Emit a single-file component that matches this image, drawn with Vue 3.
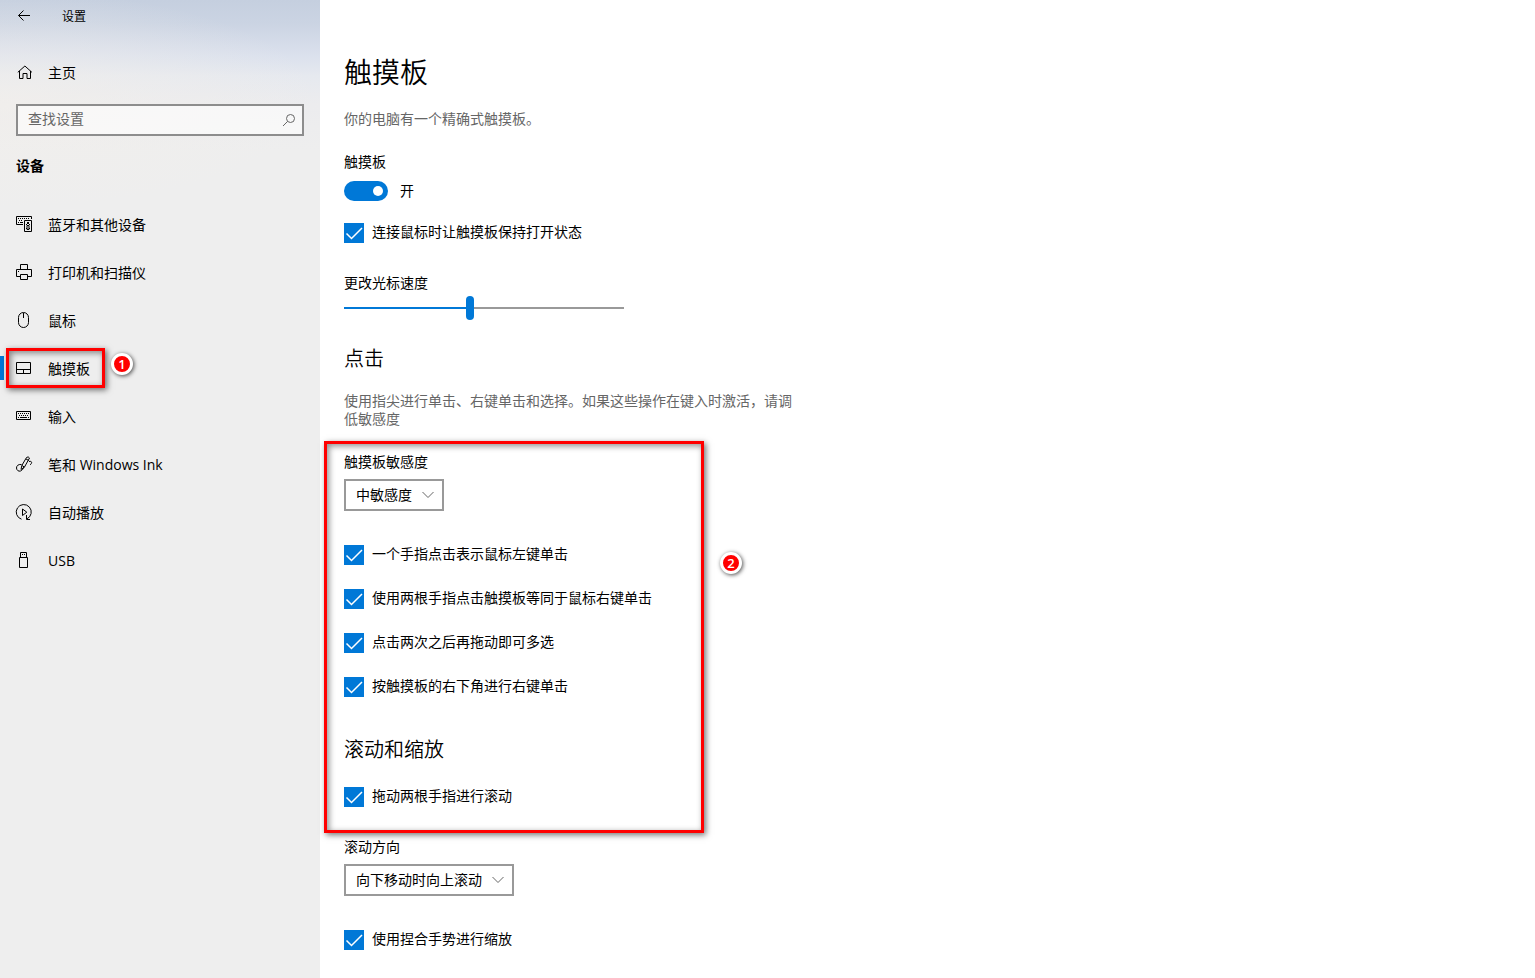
<template>
  <div class="settings">
    <aside class="sidebar">
      <header class="title-bar">
        <button class="back" type="button" aria-label="返回">
          <svg width="16" height="16" viewBox="0 0 16 16" class="icon">
            <path d="M2.5 7.5H14M7.5 2.5l-5 5 5 5" />
          </svg>
        </button>
        <span class="window-title">设置</span>
      </header>

      <a href="#home" class="nav-link home">
        <svg width="16" height="16" viewBox="0 0 16 16" class="icon">
          <path d="M1.8 8.3L8.9 2l7 6.3M3.5 7v7.5h3.500v-5h4v5h3.500V7" />
        </svg>
        <span class="nav-text">主页</span>
      </a>

      <div class="search">
        <input v-model="query" type="text" placeholder="查找设置" aria-label="查找设置" />
        <svg width="14" height="14" viewBox="0 0 14 14" class="search-icon">
          <circle cx="8.500" cy="5.500" r="4" />
          <path d="M5.600 8.400L1 13" />
        </svg>
      </div>

      <h2 class="group-title">设备</h2>

      <nav class="nav">
        <a
          v-for="item in items"
          :key="item.id"
          :href="'#' + item.id"
          class="nav-link"
          :class="{ active: item.id === current }"
          @click.prevent="current = item.id"
        >
          <svg width="16" height="16" viewBox="0 0 16 16" class="icon">
            <path v-for="(d, i) in item.lines" :key="i" :d="d" />
            <path v-if="item.fill" :d="item.fill" class="solid" />
          </svg>
          <span class="nav-text">{{ item.label }}</span>
          <template v-if="item.id === 'touchpad'">
            <span class="frame frame-nav"></span>
            <span class="step step-nav">1</span>
          </template>
        </a>
      </nav>
    </aside>

    <main class="content">
      <h1>触摸板</h1>
      <p class="hint intro">你的电脑有一个精确式触摸板。</p>

      <label class="field-label" for="touchpad-switch">触摸板</label>
      <div class="switch-row">
        <input id="touchpad-switch" v-model="enabled" type="checkbox" role="switch" class="switch" />
        <span>{{ enabled ? '开' : '关' }}</span>
      </div>

      <label class="check keep-on">
        <span class="box">
          <input v-model="keepOn" type="checkbox" />
          <svg width="20" height="20" viewBox="0 0 20 20"><path d="M2.500 10.500l5 5L18 5" /></svg>
        </span>
        连接鼠标时让触摸板保持打开状态
      </label>

      <label class="field-label after-check" for="speed">更改光标速度</label>
      <input
        id="speed"
        v-model.number="speed"
        type="range"
        min="0"
        max="20"
        class="slider"
        :style="{ '--fill': speed * 5 + '%' }"
      />

      <h2 class="section-title taps-title">点击</h2>
      <p class="hint">使用指尖进行单击、右键单击和选择。如果这些操作在键入时激活，请调低敏感度</p>

      <section class="marked">
        <label class="field-label" for="sensitivity">触摸板敏感度</label>
        <div class="select">
          <select id="sensitivity">
            <option>中敏感度</option>
          </select>
          <svg width="12" height="8" viewBox="0 0 12 8"><path d="M.5 1L6 6.500 11.500 1" /></svg>
        </div>

        <div class="check-list">
          <label v-for="tap in taps" :key="tap.label" class="check">
            <span class="box">
              <input v-model="tap.on" type="checkbox" />
              <svg width="20" height="20" viewBox="0 0 20 20"><path d="M2.500 10.500l5 5L18 5" /></svg>
            </span>
            {{ tap.label }}
          </label>
        </div>

        <h2 class="section-title scroll-title">滚动和缩放</h2>
        <label class="check">
          <span class="box">
            <input v-model="twoFinger" type="checkbox" />
            <svg width="20" height="20" viewBox="0 0 20 20"><path d="M2.500 10.500l5 5L18 5" /></svg>
          </span>
          拖动两根手指进行滚动
        </label>

        <span class="frame frame-section"></span>
        <span class="step step-section">2</span>
      </section>

      <label class="field-label after-check" for="direction">滚动方向</label>
      <div class="select">
        <select id="direction">
          <option>向下移动时向上滚动</option>
        </select>
        <svg width="12" height="8" viewBox="0 0 12 8"><path d="M.5 1L6 6.500 11.500 1" /></svg>
      </div>

      <div class="check-list">
        <label class="check">
          <span class="box">
            <input v-model="pinch" type="checkbox" />
            <svg width="20" height="20" viewBox="0 0 20 20"><path d="M2.500 10.500l5 5L18 5" /></svg>
          </span>
          使用捏合手势进行缩放
        </label>
      </div>
    </main>
  </div>
</template>

<script setup>
import { ref } from 'vue'

const query = ref('')
const current = ref('touchpad')
const enabled = ref(true)
const keepOn = ref(true)
const speed = ref(9)
const twoFinger = ref(true)
const pinch = ref(true)

const taps = ref([
  { label: '一个手指点击表示鼠标左键单击', on: true },
  { label: '使用两根手指点击触摸板等同于鼠标右键单击', on: true },
  { label: '点击两次之后再拖动即可多选', on: true },
  { label: '按触摸板的右下角进行右键单击', on: true },
])

const items = [
  {
    id: 'bluetooth',
    label: '蓝牙和其他设备',
    lines: ['M15.5 3V.5H.5v8H7', 'M8.5 4.500h7v11h-7z', 'M11 9.500h2v4h-2z'],
    fill: 'M2 2h1v1H2zM4 2h1v1H4zM6 2h1v1H6zM8 2h1v1H8zM10 2h1v1h-1zM12 2h1v1h-1zM3 4h1v1H3zM5 4h1v1H5zM2 6h1v1H2zM4 6h3v1H4zM11 6h2v2h-2zM10 8h1v1h-1zM13 8h1v1h-1zM10 12h1v1h-1zM13 12h1v1h-1z',
  },
  {
    id: 'printers',
    label: '打印机和扫描仪',
    lines: ['M4.5 5.500v-5h7v5', 'M4.5 12.500h-4v-7h15v7h-4', 'M4.5 10.500h7v5h-7z'],
    fill: 'M2 7h1v1H2z',
  },
  {
    id: 'mouse',
    label: '鼠标',
    lines: ['M2.5 5.500a5 5 0 0 1 10 0v5a5 5 0 0 1-10 0z', 'M7.500 1v5'],
  },
  {
    id: 'touchpad',
    label: '触摸板',
    lines: ['M.5 2.500h14v11H.5z', 'M.5 9.500h14', 'M7.500 9.500v4'],
  },
  {
    id: 'typing',
    label: '输入',
    lines: ['M.5 3.500h14v8H.5z'],
    fill: 'M2 5h1v1H2zM4 5h1v1H4zM6 5h1v1H6zM8 5h1v1H8zM10 5h1v1h-1zM12 5h1v1h-1zM3 7h1v1H3zM5 7h1v1H5zM7 7h1v1H7zM9 7h1v1H9zM11 7h1v1h-1zM2 9h1v1H2zM4 9h7v1H4zM12 9h1v1h-1z',
  },
  {
    id: 'pen',
    label: '笔和 Windows Ink',
    lines: [
      'M5 13.500l.8-4L10.500 1.500q1.800-1.500 3 .5L8.500 11z',
      'M6 9.500l2.300 1.500M10 3l2.800 1.500',
      'M5.500 8.500C2 8 .5 10 .5 12s2 3.800 4 3 2.500-2 3.500-4',
      'M13 5.500c3-.8 3.500 1.500 1 3.500',
    ],
  },
  {
    id: 'autoplay',
    label: '自动播放',
    lines: ['M5.500 15.200A7.500 7.500 0 1 1 11 14.800', 'M6.500 5v6.500L10.800 8.200z', 'M10.500 11v4.500H14'],
  },
  {
    id: 'usb',
    label: 'USB',
    lines: ['M4.500 5.500v-5h6v5', 'M3.500 5.500h8v10h-8z'],
    fill: 'M6 2h1v1H6zM8 2h1v1H8z',
  },
]
</script>

<style>
body {
  margin: 0;
  background: #fff;
}
</style>

<style scoped>
.settings {
  display: flex;
  min-height: 100vh;
  font-family: 'Open Sans', 'Noto Sans CJK SC', sans-serif;
  font-size: 14px;
  line-height: 18px;
  color: #000;
}

.sidebar {
  flex: 0 0 320px;
  background:
    radial-gradient(ellipse 320px 110px at 0 100px, rgba(242, 239, 235, 0.7), rgba(242, 239, 235, 0)),
    linear-gradient(#c5cfdf 0, #cbd4e3 24px, #dbe1ed 56px, #e6e9ef 76px, #ececee 104px, #eeeeee 150px, #eeeeee 220px);
}

.icon {
  flex: none;
  overflow: visible;
  fill: none;
  stroke: #000;
  stroke-width: 1;
}

.icon .solid {
  fill: #000;
  stroke: none;
}

.title-bar {
  display: flex;
  align-items: center;
  height: 32px;
}

.back {
  display: grid;
  place-items: center;
  width: 48px;
  height: 32px;
  padding: 0;
  border: 0;
  background: none;
}

.window-title {
  margin-left: 14px;
  padding-top: 2px;
  font-size: 12px;
}

.nav-link {
  position: relative;
  display: flex;
  align-items: center;
  gap: 16px;
  height: 48px;
  padding: 0 16px;
  color: #000;
  text-decoration: none;
}

.nav-text {
  padding-top: 2px;
}

.home {
  margin-top: 16px;
}

.nav-link.active::before {
  content: '';
  position: absolute;
  left: 0;
  top: 12px;
  width: 4px;
  height: 24px;
  background: #0078d7;
}

.search {
  position: relative;
  margin: 8px 16px 0;
}

.search input {
  display: block;
  box-sizing: border-box;
  width: 100%;
  height: 32px;
  padding: 0 32px 4px 10px;
  border: 2px solid #8d8d8d;
  border-radius: 0;
  outline: none;
  background: rgba(255, 255, 255, 0.6);
  font: inherit;
  color: #000;
}

.search input::placeholder {
  color: #666;
  opacity: 1;
}

.search-icon {
  position: absolute;
  right: 8px;
  top: 9px;
  fill: none;
  stroke: #666;
}

.group-title {
  margin: 20px 16px 24px;
  font-size: 14px;
  line-height: 20px;
  font-weight: 700;
}

.content {
  flex: 1;
  min-width: 0;
  box-sizing: border-box;
  padding: 54px 24px 28px;
}

h1 {
  margin: 0 0 20px;
  font-size: 28px;
  line-height: 36px;
  font-weight: 350;
}

.hint {
  max-width: 450px;
  margin: 0 0 25px;
  color: #666;
}

.field-label {
  display: block;
}

.after-check {
  margin-top: 31px;
}

.switch-row {
  display: flex;
  align-items: center;
  gap: 12px;
  height: 20px;
  margin-top: 10px;
}

.switch {
  appearance: none;
  display: flex;
  align-items: center;
  box-sizing: border-box;
  width: 44px;
  height: 20px;
  margin: 0;
  padding: 0 5px;
  border-radius: 10px;
  background: #999;
}

.switch::after {
  content: '';
  width: 10px;
  height: 10px;
  border-radius: 50%;
  background: #fff;
}

.switch:checked {
  justify-content: flex-end;
  background: #0078d7;
}

.check {
  display: flex;
  align-items: flex-start;
  gap: 8px;
  width: fit-content;
  height: 20px;
}

.keep-on {
  margin-top: 22px;
}

.check-list {
  display: grid;
  gap: 24px;
  margin-top: 34px;
}

.box {
  display: grid;
}

.box input,
.box svg {
  grid-area: 1 / 1;
}

.box input {
  appearance: none;
  box-sizing: border-box;
  width: 20px;
  height: 20px;
  margin: 0;
  border: 2px solid #333;
}

.box input:checked {
  border-color: #0078d7;
  background: #0078d7;
}

.box svg {
  z-index: 1;
  fill: none;
  stroke: #fff;
  stroke-width: 1.5;
  pointer-events: none;
}

.slider {
  appearance: none;
  display: block;
  width: 280px;
  height: 24px;
  margin: 4px 0 0;
  background: linear-gradient(to right, #0078d7 var(--fill), #999 var(--fill)) center / 100% 2px no-repeat;
}

.slider::-webkit-slider-thumb {
  appearance: none;
  width: 8px;
  height: 24px;
  border-radius: 4px;
  background: #0078d7;
}

.section-title {
  margin: 0;
  font-size: 20px;
  line-height: 28px;
  font-weight: 350;
}

.taps-title {
  margin: 25px 0 19px;
}

.scroll-title {
  margin: 39px 0 23px;
}

.select {
  position: relative;
  width: fit-content;
  margin-top: 8px;
}

.select select {
  appearance: none;
  display: block;
  box-sizing: border-box;
  height: 32px;
  padding: 0 30px 0 10px;
  border: 2px solid #999;
  border-radius: 0;
  background: #fff;
  font: inherit;
  color: #000;
}

.select svg {
  position: absolute;
  right: 10px;
  top: 12px;
  fill: none;
  stroke: #666;
  pointer-events: none;
}

.marked {
  position: relative;
  width: 340px;
}

/* red callouts drawn over the page */
.frame {
  position: absolute;
  box-sizing: border-box;
  border: 3px solid #f00;
  box-shadow: 2px 2px 6px rgba(0, 0, 0, 0.55), inset 2px 2px 6px rgba(0, 0, 0, 0.45);
  pointer-events: none;
}

.frame-nav {
  left: 6px;
  top: 4px;
  width: 99px;
  height: 40px;
}

.frame-section {
  inset: -12px -20px -26px;
}

.step {
  position: absolute;
  display: grid;
  place-items: center;
  box-sizing: border-box;
  width: 22px;
  height: 22px;
  border: 3px solid #fff;
  border-radius: 50%;
  background: #f00;
  box-shadow: 1px 1px 4px rgba(0, 0, 0, 0.7);
  font-family: 'Open Sans', sans-serif;
  font-size: 13px;
  line-height: 16px;
  font-weight: 600;
  color: #fff;
}

.step-nav {
  left: 111px;
  top: 9px;
}

.step-section {
  right: -58px;
  top: 99px;
}
</style>
